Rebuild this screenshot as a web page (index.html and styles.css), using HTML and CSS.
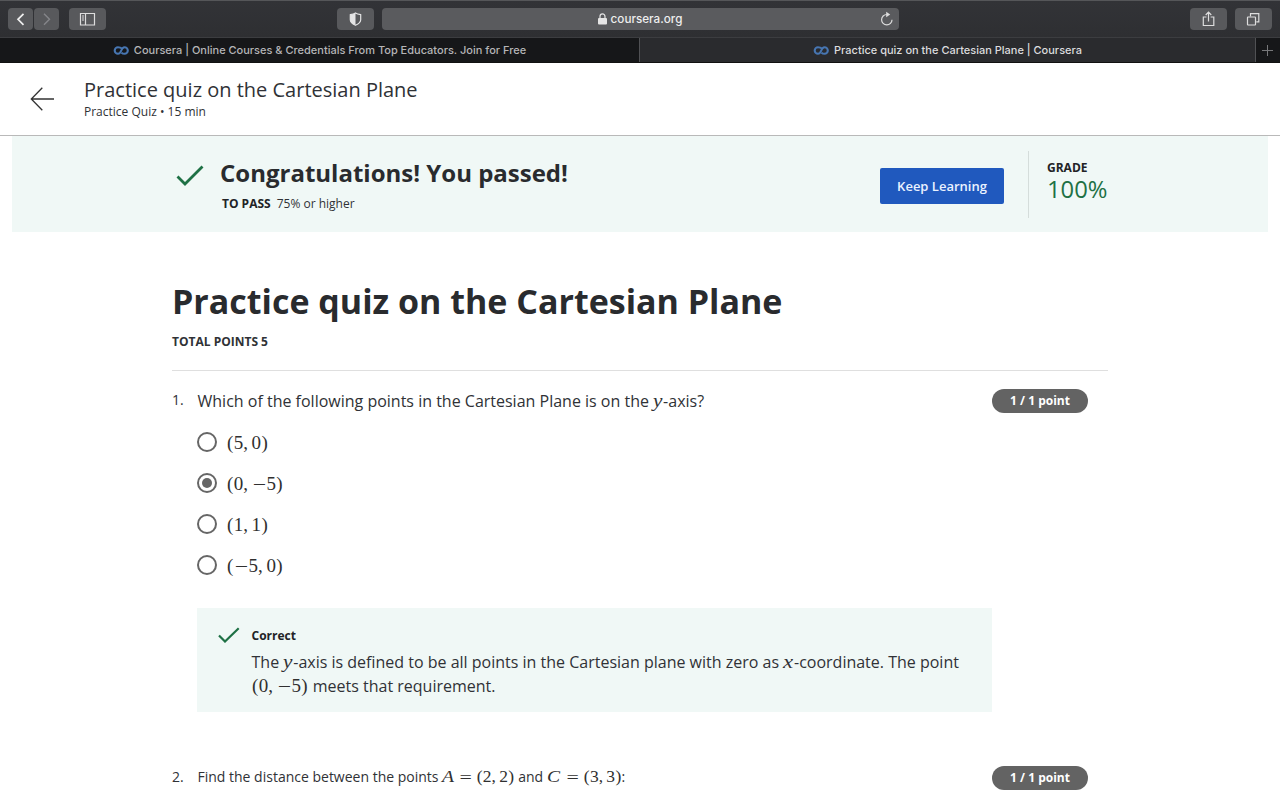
FILE: index.html
```html
<!DOCTYPE html>
<html lang="en">
<head>
<meta charset="utf-8">
<title>Practice quiz on the Cartesian Plane | Coursera</title>
<link rel="stylesheet" href="styles.css">
</head>
<body>
<div class="toolbar">
  <div class="tool-group left-group">
    <button class="tool nav"><svg width="26" height="22" viewBox="0 0 26 22"><path d="M16.500 5.800 11 11.300l5.500 5.500" stroke="#eee" stroke-width="1.700"/></svg></button>
    <button class="tool nav"><svg width="26" height="22" viewBox="0 0 26 22"><path d="M11 5.800l5.500 5.500-5.500 5.500" stroke="#85868a" stroke-width="1.400"/></svg></button>
    <button class="tool side"><svg width="37" height="22" viewBox="0 0 37 22"><path d="M11.500 5.500h14v11.500h-14zM16.500 5.500V17M13 8h2M13 10h2M13 12h2" stroke="#ddd" stroke-width="1.200"/></svg></button>
  </div>
  <div class="tool-group mid-group">
    <button class="tool"><svg width="37" height="22" viewBox="0 0 37 22"><path d="M18.500 5c1.500 1 3.200 1.400 5.200 1.700v5c0 2.500-2.200 4.200-5.200 5.600-3-1.400-5.200-3.100-5.200-5.600v-5C15.300 6.400 17 6 18.500 5z" stroke="#e4e4e5" stroke-width="1.200"/><path d="M18.500 5v12.300c-3-1.400-5.200-3.100-5.200-5.600v-5C15.300 6.400 17 6 18.500 5z" fill="#e4e4e5"/></svg></button>
    <div class="address">
      <div class="host"><svg width="9" height="12" viewBox="0 0 9 12"><rect y="5" width="9" height="6.500" rx="1" fill="#e5e5e5"/><path d="M2 5.500V3.500a2.500 2.700 0 0 1 5 0v2" stroke="#e5e5e5" stroke-width="1.200"/></svg><span>coursera.org</span></div>
      <svg class="reload" width="14" height="16" viewBox="0 0 14 16"><path d="M6.800 3.500a5.200 5.200 0 1 0 5.200 5.200" stroke="#ddd" stroke-width="1.200"/><path d="M6.200.800l4 2.700-4 2.700z" fill="#ddd"/></svg>
    </div>
  </div>
  <div class="tool-group right-group">
    <button class="tool"><svg width="37" height="22" viewBox="0 0 37 22"><path d="M16.500 9h-3.200v8.500h10.500V9h-3.200M18.500 13.500V4.500M15.700 7l2.800-2.800L21.300 7" stroke="#ddd" stroke-width="1.200"/></svg></button>
    <button class="tool"><svg width="37" height="22" viewBox="0 0 37 22"><rect x="12.500" y="9" width="8" height="8" rx=".5" stroke="#ddd" stroke-width="1.200"/><path d="M15.500 8.500V5.700h8.300v8.200h-2.500" stroke="#ddd" stroke-width="1.200"/></svg></button>
  </div>
</div>
<div class="tabs">
  <div class="tab"><svg class="infinity" width="16" height="9" viewBox="0 0 16 9"><path d="M9 2.500C7.800 1.500 6.500 1.200 5 1.200a3.300 3.300 0 0 0 0 6.600C9 7.800 7.500 1.200 11.500 1.200a3.300 3.300 0 0 1 0 6.600c-1.200 0-2.200-.400-3-1.100"/></svg><span class="tab1-text">Coursera | Online Courses &amp; Credentials From Top Educators. Join for Free</span></div>
  <div class="tab active"><svg class="infinity" width="16" height="9" viewBox="0 0 16 9"><path d="M9 2.500C7.800 1.500 6.500 1.200 5 1.200a3.300 3.300 0 0 0 0 6.600C9 7.800 7.500 1.200 11.500 1.200a3.300 3.300 0 0 1 0 6.600c-1.200 0-2.200-.400-3-1.100"/></svg><span class="tab2-text">Practice quiz on the Cartesian Plane | Coursera</span></div>
  <div class="add"><svg width="12" height="12" viewBox="0 0 12 12"><path d="M0 6.500h11M5.500 1v11" stroke="#77787a"/></svg></div>
</div>
<header class="page-header">
  <svg width="24" height="24" viewBox="0 0 24 24"><path d="M24 12H1.500M12.300.800 1.300 12l11 11.200" stroke="#333" stroke-width="1.300"/></svg>
  <div>
    <div class="page-title">Practice quiz on the Cartesian Plane</div>
    <div class="page-sub">Practice Quiz • 15 min</div>
  </div>
</header>
<section class="banner">
  <svg class="pass-check" width="28" height="22" viewBox="0 0 28 22"><path d="M1.500 11.500 9 19 26.500 1.500" stroke="#1e7145" stroke-width="2.800"/></svg>
  <div class="pass-copy">
    <div class="congrats">Congratulations! You passed!</div>
    <div class="threshold"><b>TO PASS</b><span>75% or higher</span></div>
  </div>
  <button class="keep"><span>Keep Learning</span></button>
  <div class="grade"><b>GRADE</b><span>100%</span></div>
</section>
<main class="quiz">
  <h1><span>Practice quiz on the Cartesian Plane</span></h1>
  <div class="total"><span>TOTAL POINTS 5</span></div>
  <section class="question">
    <div class="number">1.</div>
    <div class="body">
      <p class="prompt"><span>Which of the following points in the Cartesian Plane is on the <i class="v">y</i>-axis?</span></p>
      <div class="choices">
        <div class="choice"><i class="radio"></i><span class="math"><s>(</s>5<u>,</u>0<s>)</s></span></div>
        <div class="choice"><i class="radio on"></i><span class="math"><s>(</s>0<u>,</u><em>−</em>5<s>)</s></span></div>
        <div class="choice"><i class="radio"></i><span class="math"><s>(</s>1<u>,</u>1<s>)</s></span></div>
        <div class="choice"><i class="radio"></i><span class="math"><s>(</s><em>−</em>5<u>,</u>0<s>)</s></span></div>
      </div>
      <div class="feedback">
        <svg width="22" height="16" viewBox="0 0 22 16"><path d="M1 8.500 7 14.500 20.700 1.300" stroke="#1e7145" stroke-width="2.200"/></svg>
        <div>
          <b>Correct</b>
          <p><span class="line1">The <i class="v">y</i>-axis is defined to be all points in the Cartesian plane with zero as <i class="v x">x</i>-coordinate. The point</span><br><span class="line2"><span class="math"><s>(</s>0<u>,</u><em>−</em>5<s>)</s></span> meets that requirement.</span></p>
        </div>
      </div>
    </div>
    <div class="points">1 / 1 point</div>
  </section>
  <section class="question second">
    <div class="number">2.</div>
    <div class="body">
      <p class="prompt"><span>Find the distance between the points</span> <span class="math"><i class="cap-a">A</i><em class="eq">=</em><s>(</s>2<u>,</u>2<s>)</s></span> <span>and</span> <span class="math"><i class="cap-c">C</i><em class="eq">=</em><s>(</s>3<u>,</u>3<s>)</s></span>:</p>
    </div>
    <div class="points">1 / 1 point</div>
  </section>
</main>
</body>
</html>
```
FILE: styles.css
```css
* { box-sizing: border-box; }
body { margin: 0; width: 1280px; height: 800px; overflow: hidden; background: #fff; color: #303236; font-family: "Open Sans", sans-serif; }
svg { display: block; fill: none; flex: none; }
button { border: 0; padding: 0; font: inherit; }
p { margin: 0; }

.toolbar { height: 38px; background: linear-gradient(#323337, #2e2f32); border-top: 1px solid #555659; border-bottom: 1px solid #3c3d40; display: flex; align-items: center; justify-content: space-between; padding: 0 8px; }
.tool-group { display: flex; }
.left-group { width: 328.5px; gap: 1px; }
.mid-group { gap: 8px; flex: 1; }
.right-group { gap: 8px; }
.tool { width: 37px; height: 22px; border-radius: 4px; background: #58595c; }
.tool.nav { width: 25px; }
.nav svg { margin-left: -1px; }
.tool.side { margin-left: 9px; }
.address { width: 517px; height: 22px; border-radius: 4px; background: #5a5b5e; display: grid; grid-template-columns: 1fr auto 1fr; align-items: center; color: #eee; font: 500 11.7px Inter, sans-serif; }
.host { grid-column: 2; display: flex; gap: 4px; align-items: center; }
.reload { justify-self: end; margin-right: 5px; }
.right-group { flex: none; }

.tabs { height: 25px; display: flex; background: #161719; border-bottom: 1px solid #111; font: 500 11px Inter, sans-serif; color: #b5b5b7; }
.tab { width: 639px; display: flex; align-items: center; justify-content: center; gap: 5px; white-space: nowrap; }
.tab.active { width: 616px; background: #2a2b2e; border-left: 1px solid #505154; color: #dcdcde; }
.infinity path { stroke: #4776b2; stroke-width: 2.1; }
.add { width: 25px; border-left: 1px solid #505154; display: flex; align-items: center; justify-content: center; }

.page-header { height: 73px; border-bottom: 1px solid #b9b9b9; display: flex; align-items: flex-start; gap: 30px; padding: 14px 30px 0; }
.page-header svg { margin-top: 10px; }
.page-title { font-size: 20px; line-height: 26px; }
.page-sub { font-size: 12px; line-height: 17px; }

.banner { height: 96px; margin: 0 12px; background: #f0f8f6; display: flex; padding: 15px 0 0 164px; }
.pass-check { margin-top: 14px; }
.pass-copy { width: 660px; margin-left: 16px; padding-top: 5px; }
.congrats { font-size: 24px; line-height: 34px; font-weight: 700; color: #292b2e; white-space: nowrap; }
.threshold { display: flex; gap: 6px; font-size: 12px; line-height: 18px; margin: 5px 0 0 2px; }
b { color: #222326; }
.keep { width: 124px; height: 36px; margin-top: 17px; background: #2059be; color: #eaf2ff; border-radius: 2px; font-size: 13px; font-weight: 600; }
.grade { margin-left: 24px; height: 67px; border-left: 1px solid #d5dddb; padding: 8px 0 0 18px; display: flex; flex-direction: column; }
.grade b { font-size: 12px; line-height: 18px; }
.grade span { font-size: 23.8px; line-height: 24px; color: #1e7145; }

.quiz { margin-left: 172px; width: 936px; padding-top: 43px; }
h1 { margin: 0; font-size: 34px; line-height: 52px; font-weight: 700; color: #292b2e; white-space: nowrap; }
.total { font-size: 12px; line-height: 18px; font-weight: 700; padding-top: 6px; height: 44px; border-bottom: 1px solid #dfdfdf; }
.question { display: grid; grid-template-columns: 25px 795px 96px; padding-top: 18px; }
.number { font-size: 14px; line-height: 22px; }
.prompt { font-size: 16px; line-height: 24px; white-space: nowrap; padding-left: .5px; }
.choices { padding-top: 8px; }
.choice { height: 41px; display: flex; align-items: center; gap: 9.5px; }
.choice .math { padding-top: 2px; }
.radio { width: 20px; height: 20px; border: 2px solid #666; border-radius: 50%; margin-top: 1px; display: flex; align-items: center; justify-content: center; }
.radio.on::after { content: ""; width: 10px; height: 10px; border-radius: 50%; background: #666; }
.points { width: 96px; height: 24px; border-radius: 12px; background: #636363; color: #fff; font-size: 12px; line-height: 24px; font-weight: 700; text-align: center; }

.math { font-family: "Liberation Serif", serif; font-size: 19px; color: #303030; white-space: nowrap; }
.math s, .math em { display: inline-block; text-decoration: none; font-style: normal; text-align: center; }
.math s { width: .38em; }
.math u { text-decoration: none; margin-right: .19em; }
.math em { width: .78em; transform: translateY(1px) scaleX(1.25); }
.math .eq { width: .77em; margin: 0 .25em; }
.v { display: inline-block; width: 10px; font: italic 19px/16px "Liberation Serif", serif; transform: scaleX(1.12); transform-origin: left; }
.v.x { width: 10.8px; transform: scaleX(1.2); }

.feedback { margin-top: 23px; height: 104px; background: #f0f8f6; display: flex; padding: 19px 0 0 21px; gap: 11.5px; }
.feedback b { display: block; font-size: 12px; line-height: 18px; }
.feedback p { font-size: 16px; line-height: 24px; white-space: nowrap; padding-top: 5px; }
.line2 .math { margin-right: .5px; }
.second { padding-top: 53px; }
.second .points { margin-top: 1px; }
.second .number { padding-top: 1px; }
.second .prompt { font-size: 14px; line-height: 22px; }
.second .math { font-size: 17.5px; }
.second .math s { width: .37em; }
.cap-a, .cap-c { display: inline-block; transform: scaleX(1.12); transform-origin: left; }
.cap-a { width: 12px; }
.cap-c { width: 14.500px; }
```
